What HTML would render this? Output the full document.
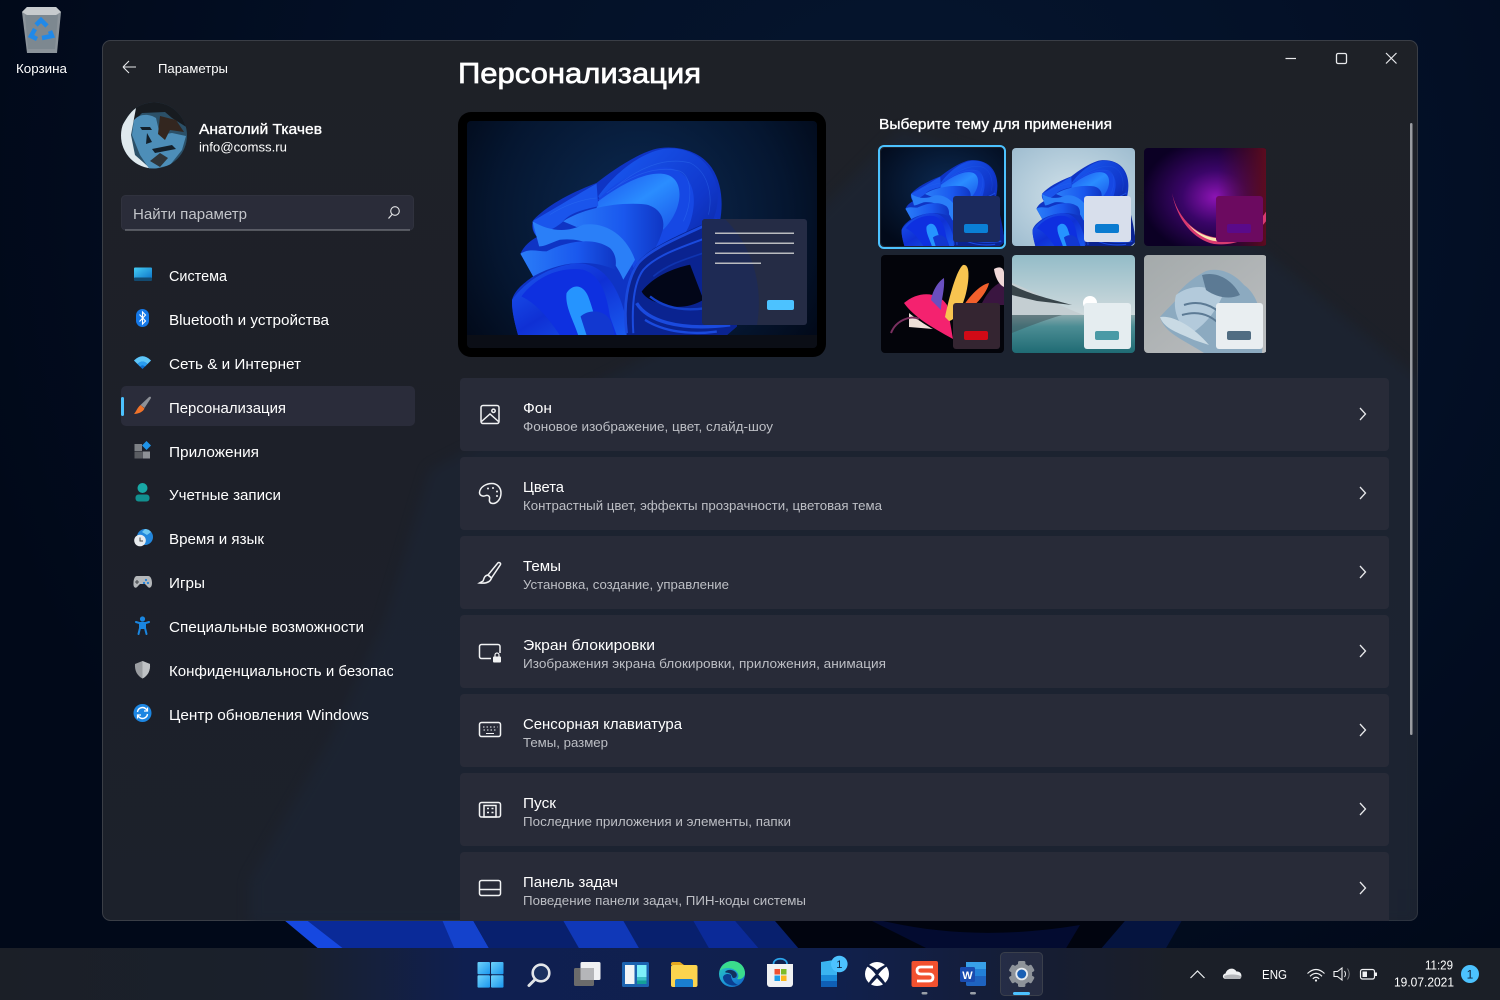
<!DOCTYPE html>
<html lang="ru">
<head>
<meta charset="utf-8">
<title>Параметры — Персонализация</title>
<style>
html,body{margin:0;padding:0;width:1500px;height:1000px;overflow:hidden;background:#020b1e}
svg{display:block;position:absolute;left:0;top:0}
text{font-family:"Liberation Sans","DejaVu Sans",sans-serif;fill:#fff;white-space:pre}
.t15{font-size:15px}
.t13{font-size:13px}
.sub{font-size:13px;fill:#bdbfc5}
</style>
</head>
<body>
<svg width="1500" height="1000" viewBox="0 0 1500 1000" xmlns="http://www.w3.org/2000/svg">
<defs>
  <radialGradient id="wall" gradientUnits="userSpaceOnUse" cx="900" cy="200" r="950">
    <stop offset="0" stop-color="#06162f"/><stop offset=".6" stop-color="#030f25"/><stop offset="1" stop-color="#010919"/>
  </radialGradient>
  <linearGradient id="taskbar" x1="0" x2="1" y1="0" y2="0">
    <stop offset="0" stop-color="#1b1f27"/><stop offset=".2" stop-color="#1a202c"/><stop offset=".31" stop-color="#0f1f50"/><stop offset=".55" stop-color="#10204e"/><stop offset=".7" stop-color="#161d32"/><stop offset=".78" stop-color="#1b1f28"/><stop offset="1" stop-color="#1b1f27"/>
  </linearGradient>
  <linearGradient id="winbg" x1="0" x2="0" y1="0" y2="1">
    <stop offset="0" stop-color="#1e2127"/><stop offset=".5" stop-color="#1d2029"/><stop offset="1" stop-color="#1c212b"/>
  </linearGradient>
  <filter id="soft" x="-10%" y="-10%" width="120%" height="120%" color-interpolation-filters="sRGB"><feGaussianBlur stdDeviation="6"/></filter>
  <clipPath id="winclip"><rect x="102" y="40" width="1316" height="881" rx="8"/></clipPath>
  <clipPath id="navclip"><rect x="160" y="650" width="233" height="40"/></clipPath>
  <clipPath id="tc"><rect width="123" height="98" rx="4"/></clipPath>
  <clipPath id="av"><circle cx="154" cy="135.500" r="33"/></clipPath>
  <clipPath id="pv"><rect x="467" y="121" width="350" height="227" rx="4"/></clipPath>

  <linearGradient id="bTop" x1="0" y1="0" x2="1" y2="1"><stop offset="0" stop-color="#1a5cf5"/><stop offset=".6" stop-color="#1038cc"/><stop offset="1" stop-color="#0a1f8a"/></linearGradient>
  <linearGradient id="bBright" x1="0" y1="0" x2="1" y2="1"><stop offset="0" stop-color="#1b52ee"/><stop offset=".5" stop-color="#2a8dff"/><stop offset="1" stop-color="#1a56ea"/></linearGradient>
  <linearGradient id="bMid" x1="0" y1="0" x2="1" y2="0"><stop offset="0" stop-color="#2a7df8"/><stop offset=".6" stop-color="#1a58ee"/><stop offset="1" stop-color="#0f36c4"/></linearGradient>
  <linearGradient id="bLow" x1="0" y1="0" x2="1" y2="1"><stop offset="0" stop-color="#1c5af2"/><stop offset=".5" stop-color="#0f30d4"/><stop offset="1" stop-color="#1a5cf0"/></linearGradient>
  <radialGradient id="pvbg" gradientUnits="userSpaceOnUse" cx="640" cy="215" r="210">
    <stop offset="0" stop-color="#0c2a52"/><stop offset=".7" stop-color="#051630"/><stop offset="1" stop-color="#020a1a"/>
  </radialGradient>

  <symbol id="bloom" viewBox="52 64 1048 642" preserveAspectRatio="xMinYMid slice">
    <path d="M187 600C195 570 225 548 250 530L212 462C222 438 245 420 262 412C248 398 244 378 250 362C290 320 350 285 440 250C490 210 560 165 610 150C660 135 745 145 785 205C825 265 820 350 795 420C830 500 860 620 860 680L830 706H205C195 670 185 630 187 600Z" fill="#0f34c4"/>
    <path d="M445 290C490 225 570 160 640 148C710 138 780 175 800 260C815 340 770 420 700 470C650 505 590 530 555 560L500 380Z" fill="url(#bTop)"/>
    <path d="M445 300C500 240 590 195 660 205C730 225 745 290 720 370C700 430 630 480 560 530L500 370Z" fill="#1648e4"/>
    <path d="M445 305C505 260 590 210 650 225C705 240 700 330 640 390C600 335 520 320 440 325Z" fill="url(#bBright)"/>
    <path d="M252 362C300 335 390 280 440 252L445 320C400 330 360 340 340 365C310 392 285 395 262 412C250 395 246 378 252 362Z" fill="#1a55ec"/>
    <path d="M340 365C400 325 510 305 590 315C630 325 650 360 635 400C620 450 590 480 570 510C540 420 470 370 380 382Z" fill="url(#bMid)"/>
    <path d="M248 365C300 395 350 400 400 375C470 365 530 410 555 480L520 540C490 470 430 410 330 420C300 430 285 440 268 440Z" fill="#2a7ff8"/>
    <path d="M212 462C240 445 260 455 290 455C350 425 430 410 480 445C500 465 500 490 495 510C430 480 340 480 250 530Z" fill="url(#bMid)"/>
    <path d="M187 600C230 540 300 500 380 490C450 490 490 540 515 610L545 706H205C195 670 185 630 187 600Z" fill="url(#bLow)"/>
    <path d="M215 590C260 530 330 500 400 510C450 525 470 580 480 650L500 706H330C300 660 260 610 215 590Z" fill="#0e30e0"/>
    <path d="M350 580C370 550 400 555 415 590C430 630 440 670 445 706H385C370 660 345 620 350 580Z" fill="#2594ff"/>
    <path d="M392 650C420 625 470 630 485 670L495 706H410Z" fill="#1238d0"/>
    <path d="M530 706C525 620 525 540 560 490C600 440 700 400 790 360C830 470 860 620 860 680L830 706Z" fill="#0a2390"/>
    <path d="M575 575C610 530 670 505 720 495L760 600C720 625 670 625 640 615C610 605 585 595 575 575Z" fill="#020618"/>
    <g fill="none" stroke="#1a4ade">
      <path d="M530 700C520 620 530 540 565 490C610 440 700 410 800 360" stroke-width="8"/>
      <path d="M550 700C545 620 550 550 580 510C620 465 700 440 795 405" stroke-width="6"/>
      <path d="M560 610C590 660 680 695 840 675" stroke-width="10"/>
      <path d="M585 660C640 695 720 706 800 695" stroke-width="7"/>
      <path d="M600 590C650 630 720 640 815 615" stroke-width="7" stroke="#1440c8"/>
      <path d="M610 530C650 495 700 480 775 455" stroke="#0f34b0" stroke-width="5"/>
    </g>
    <g fill="none" stroke="#3a80f8" stroke-width="2" opacity=".35">
      <path d="M500 260C560 210 640 170 720 190C770 215 790 280 775 345"/>
      <path d="M470 280C540 230 620 195 690 215C730 235 725 310 700 365"/>
      <path d="M300 345C340 320 390 300 440 295"/>
    </g>
  </symbol>

  <g id="chev"><path d="M0 -6L5.500 0L0 6" fill="none" stroke="#e8e9eb" stroke-width="1.300"/></g>
</defs>

<!-- wallpaper -->
<rect width="1500" height="1000" fill="url(#wall)"/>
<g>
  <path d="M278 915L322 950H470L455 915Z" fill="#0a2a98"/>
  <path d="M278 915L300 915L345 950H320Z" fill="#1648e0"/>
  <path d="M440 915L455 950H490L470 915Z" fill="#1442cc"/>
  <path d="M470 915L490 950H800L770 915Z" fill="#08206e"/>
  <path d="M560 915L580 950H640L620 915Z" fill="#1038b8"/>
  <path d="M690 915L710 950H760L730 915Z" fill="#0b2a98"/>
  <path d="M770 915H1130L1100 950H800Z" fill="#01040f"/>
  <path d="M860 915C930 935 1000 938 1080 925L1065 950H930Z" fill="#030b30"/>
  <path d="M1130 915H1185L1165 950H1100Z" fill="#05143f"/>
</g>

<!-- recycle bin -->
<path d="M22 12L27 7H56L61 12L57 53H27Z" fill="#8b939a"/>
<path d="M22 12L27 7H56L61 12L56 15H27Z" fill="#c7cbce"/>
<path d="M25 15H58L55 49H28Z" fill="#7d8890"/>
<g fill="none" stroke="#2189e8" stroke-width="4.500">
  <path d="M36 25L41 20L47 26"/>
  <path d="M50 31L52 36L42 38"/>
  <path d="M37 39L31 36L35 29"/>
</g>
<text x="16" y="73" class="t13" textLength="51" lengthAdjust="spacingAndGlyphs">Корзина</text>

<!-- window -->
<rect x="102.500" y="40.500" width="1315" height="880" rx="8" fill="url(#winbg)" stroke="#3a3e46"/>
<g clip-path="url(#winclip)">
  <path d="M430 470L385 620L330 740L250 880V925H1420V380L1250 240L900 130L700 330Z" fill="#1c2637" opacity=".55" filter="url(#soft)"/>
</g>

<!-- title bar -->
<path d="M123 67H136M123 67L129 61M123 67L129 73" fill="none" stroke="#e8e9eb" stroke-width="1.100"/>
<text x="158" y="73" class="t13" textLength="70" lengthAdjust="spacingAndGlyphs">Параметры</text>
<path d="M1285.500 58.500H1296" stroke="#e8e9eb" stroke-width="1.200"/>
<rect x="1336.500" y="53.500" width="10" height="10" rx="1.500" fill="none" stroke="#e8e9eb" stroke-width="1.300"/>
<path d="M1386 53L1396.500 63.500M1396.500 53L1386 63.500" stroke="#e8e9eb" stroke-width="1.200"/>

<!-- avatar -->
<g clip-path="url(#av)">
  <rect x="120" y="102" width="68" height="68" fill="#2b5068"/>
  <path d="M120 102H188V128L172 118L165 112L142 113L130 125L120 140Z" fill="#171b20"/>
  <path d="M120 130C125 120 130 112 136 108L131 135L135 155L152 170H120Z" fill="#dfe9ee"/>
  <path d="M134 120C140 113 150 114 156 118L160 135L172 133L186 136L182 150L170 165L150 170L140 155L132 135Z" fill="#4d8eb8"/>
  <path d="M160 116L176 120L184 132L170 130L165 140L158 134Z" fill="#33261f"/>
  <path d="M140 127H150L152 130H142ZM147 133L152 142L146 144ZM152 149L172 145L176 149L155 153Z" fill="#14202a"/>
  <path d="M160 153L168 158L160 167L150 161Z" fill="#2f3438"/>
</g>
<text x="199" y="134" class="t15" stroke="#fff" stroke-width=".35" textLength="123" lengthAdjust="spacingAndGlyphs">Анатолий Ткачев</text>
<text x="199" y="151.500" class="t13" textLength="88" lengthAdjust="spacingAndGlyphs">info@comss.ru</text>

<!-- search -->
<rect x="121.500" y="195.500" width="292" height="34.500" rx="4" fill="#2a2c39" stroke="#30323e"/>
<path d="M125 230H410" stroke="#8b8d93" stroke-width="1"/>
<text x="133" y="219" class="t15" style="fill:#c2c4c9" textLength="114" lengthAdjust="spacingAndGlyphs">Найти параметр</text>
<circle cx="395" cy="211" r="4.300" fill="none" stroke="#e5e6e8" stroke-width="1.100"/>
<path d="M392 214.500L388.500 218.500" stroke="#e5e6e8" stroke-width="1.200"/>

<!-- nav -->
<rect x="121" y="386" width="294" height="40" rx="5" fill="#2a2c3a"/>
<rect x="121" y="397" width="3" height="19" rx="1.500" fill="#4cc2ff"/>
<g class="t15">
  <text x="169" y="281" class="t15" textLength="58" lengthAdjust="spacingAndGlyphs">Система</text>
  <text x="169" y="325" class="t15" textLength="160" lengthAdjust="spacingAndGlyphs">Bluetooth и устройства</text>
  <text x="169" y="369" class="t15" textLength="132" lengthAdjust="spacingAndGlyphs">Сеть &amp; и Интернет</text>
  <text x="169" y="413" class="t15" textLength="117" lengthAdjust="spacingAndGlyphs">Персонализация</text>
  <text x="169" y="457" class="t15" textLength="90" lengthAdjust="spacingAndGlyphs">Приложения</text>
  <text x="169" y="500" class="t15" textLength="112" lengthAdjust="spacingAndGlyphs">Учетные записи</text>
  <text x="169" y="544" class="t15" textLength="95" lengthAdjust="spacingAndGlyphs">Время и язык</text>
  <text x="169" y="588" class="t15" textLength="36" lengthAdjust="spacingAndGlyphs">Игры</text>
  <text x="169" y="632" class="t15" textLength="195" lengthAdjust="spacingAndGlyphs">Специальные возможности</text>
  <g clip-path="url(#navclip)"><text x="169" y="676" class="t15" textLength="264" lengthAdjust="spacingAndGlyphs">Конфиденциальность и безопасность</text></g>
  <text x="169" y="720" class="t15" textLength="200" lengthAdjust="spacingAndGlyphs">Центр обновления Windows</text>
</g>

<!-- nav icons -->
<defs>
  <linearGradient id="sys" x1="0" y1="0" x2="1" y2="1"><stop offset="0" stop-color="#45cdf5"/><stop offset="1" stop-color="#0e76c8"/></linearGradient>
</defs>
<rect x="134" y="267.500" width="18" height="11" rx="1" fill="url(#sys)"/>
<rect x="134" y="277.500" width="18" height="3.500" rx="1" fill="#124a70"/>
<rect x="136" y="309" width="13" height="18" rx="6.500" fill="#1478e8"/>
<path d="M139.500 314.500L145.500 321L142.500 324V312L145.500 315L139.500 321.500" fill="none" stroke="#fff" stroke-width="1.100"/>
<path d="M134 360.500Q142.500 352 151 360.500L142.500 369Z" fill="#0d70d2"/>
<path d="M134 360.500Q142.500 352 151 360.500L147.500 364Q142.500 359 137.500 364Z" fill="#5ec6f8"/>
<path d="M137.500 364Q142.500 359 147.500 364L145 366.500Q142.500 364 140 366.500Z" fill="#2a9df0"/>
<path d="M140.500 405L149 397Q151 396 151 398L144.500 408Z" fill="#8e9197"/>
<path d="M140.500 405L144.500 408.500C143 412 138 414 134 414C136 412 137 408 140.500 405Z" fill="#f0732a"/>
<rect x="134.500" y="444" width="7.500" height="7" fill="#7d8085"/>
<rect x="134.500" y="451.500" width="7.500" height="7" fill="#5a5d62"/>
<rect x="142.500" y="451.500" width="7.500" height="7" fill="#8e9196"/>
<path d="M146.500 441L151 445.500L146.500 450L142 445.500Z" fill="#1f93e8"/>
<circle cx="142.500" cy="488" r="5" fill="#18a8a5"/>
<rect x="135.500" y="494.500" width="14" height="7" rx="3" fill="#12908f"/>
<circle cx="145" cy="537" r="8" fill="#2387dc"/>
<path d="M145 529a8 8 0 0 1 6 3l-4 3-5-3z" fill="#6fc8f2"/>
<circle cx="140" cy="540.500" r="5.800" fill="#e8ebee"/>
<path d="M140 537.500V541H143" fill="none" stroke="#444" stroke-width="1"/>
<path d="M137 576H148C151 576 152 580 152 583C152 588 149 589 147 586L145 584H140L138 586C136 589 133 588 133.500 583C133.500 580 134.500 576 137 576Z" fill="#b4b7ba"/>
<path d="M137 580v4M135 582h4" stroke="#45484c" stroke-width="1.100"/>
<circle cx="146" cy="580" r="1.100" fill="#1f7fd8"/><circle cx="148" cy="583" r="1.100" fill="#1f7fd8"/><circle cx="144" cy="583" r="1.100" fill="#1f7fd8"/>
<circle cx="142.500" cy="619" r="2.600" fill="#1a86e0"/>
<path d="M136 622L142.500 624L149 622M141 624L138.500 634M144 624L146.500 634M140 624H145V628H140Z" fill="#1a86e0" stroke="#1a86e0" stroke-width="2" stroke-linecap="round"/>
<path d="M142.500 661L150 664C150.500 671 147.500 676 142.500 678.500C137.500 676 134.500 671 135 664Z" fill="#9a9da1"/>
<path d="M142.500 661L150 664C150.500 671 147.500 676 142.500 678.500Z" fill="#bfc2c5"/>
<circle cx="142.500" cy="713" r="9" fill="#1c86e2"/>
<path d="M137.500 712a5 5 0 0 1 8.500-3l1.500 1.500M147.500 714a5 5 0 0 1-8.500 3l-1.500-1.500" fill="none" stroke="#fff" stroke-width="1.400"/>
<path d="M147.500 707.500v3.500h-3.500M137.500 718.500v-3.500h3.500" fill="none" stroke="#fff" stroke-width="1.200"/>

<!-- heading -->
<text x="458" y="83" font-size="29" stroke="#fff" stroke-width=".7" textLength="243" lengthAdjust="spacingAndGlyphs">Персонализация</text>

<!-- preview -->
<rect x="458" y="112" width="368" height="245" rx="13" fill="#000"/>
<g clip-path="url(#pv)">
  <rect x="467" y="121" width="350" height="227" fill="url(#pvbg)"/>
  <use href="#bloom" x="467" y="121" width="350" height="214"/>
  <rect x="467" y="335" width="350" height="13" fill="#0b0e16"/>
</g>
<rect x="702" y="219" width="105" height="106" rx="3" fill="#252c45"/>
<path d="M702 222a3 3 0 0 1 3-3h20c30 30 38 70 32 106h-52a3 3 0 0 1-3-3z" fill="#1d2b58" opacity=".8"/>
<g fill="#b9bbbf">
  <rect x="715" y="232.500" width="79" height="1.500"/>
  <rect x="715" y="242.500" width="79" height="1.500"/>
  <rect x="715" y="252.500" width="79" height="1.500"/>
  <rect x="715" y="262.500" width="46" height="1.500"/>
</g>
<rect x="767" y="300" width="27" height="10" rx="2" fill="#4cc2ff"/>

<!-- theme picker -->
<text x="879" y="129" class="t15" stroke="#fff" stroke-width=".35" textLength="233" lengthAdjust="spacingAndGlyphs">Выберите тему для применения</text>

<defs>
  <radialGradient id="t1bg" cx=".55" cy=".4" r=".7"><stop offset="0" stop-color="#0c2a52"/><stop offset="1" stop-color="#020a1a"/></radialGradient>
  <radialGradient id="t2bg" cx=".5" cy=".5" r=".7"><stop offset="0" stop-color="#d2e2ea"/><stop offset="1" stop-color="#9fbdd0"/></radialGradient>
  <radialGradient id="t3bg" cx=".58" cy=".5" r=".6"><stop offset="0" stop-color="#8c14b4"/><stop offset=".45" stop-color="#3a0568"/><stop offset="1" stop-color="#0b0024"/></radialGradient>
  <linearGradient id="t3r" x1="0" x2="1" y1="0" y2="0"><stop offset=".6" stop-color="#500a30" stop-opacity="0"/><stop offset="1" stop-color="#5e0c1e"/></linearGradient>
  <linearGradient id="t5s" x1="0" x2="0" y1="0" y2="1"><stop offset="0" stop-color="#93bcc8"/><stop offset="1" stop-color="#cfdadd"/></linearGradient>
  <linearGradient id="t5w" x1="0" x2="0" y1="0" y2="1"><stop offset="0" stop-color="#8aa9ad"/><stop offset=".3" stop-color="#4c8d94"/><stop offset="1" stop-color="#1f6b74"/></linearGradient>
  <linearGradient id="t6bg" x1="0" x2="1" y1="0" y2="1"><stop offset="0" stop-color="#a4aaab"/><stop offset="1" stop-color="#bcbec0"/></linearGradient>
</defs>

<rect x="879" y="146" width="126" height="102" rx="5" fill="none" stroke="#4cc2ff" stroke-width="2"/>
<svg x="881" y="148" width="123" height="98" viewBox="0 0 123 98">
  <g clip-path="url(#tc)">
    <rect width="123" height="98" fill="url(#t1bg)"/>
    <use href="#bloom" width="123" height="98"/>
    <rect x="72" y="48" width="47" height="46" rx="3" fill="#1b2a5e"/>
    <rect x="83" y="76" width="24" height="9" rx="2" fill="#0a7fd6"/>
  </g>
</svg>
<svg x="1012" y="148" width="123" height="98" viewBox="0 0 123 98">
  <g clip-path="url(#tc)">
    <rect width="123" height="98" fill="url(#t2bg)"/>
    <use href="#bloom" width="123" height="98"/>
    <rect x="72" y="48" width="47" height="46" rx="3" fill="#d8dfec"/>
    <rect x="83" y="76" width="24" height="9" rx="2" fill="#0a7bd0"/>
  </g>
</svg>
<svg x="1144" y="148" width="122" height="98" viewBox="0 0 122 98">
  <g clip-path="url(#tc)">
    <rect width="123" height="98" fill="url(#t3bg)"/>
    <rect width="123" height="98" fill="url(#t3r)"/>
    <path d="M28 45C34 72 55 90 78 90C95 90 112 80 123 62V72C108 92 90 98 70 96C50 92 33 72 28 45Z" fill="#d83a70"/>
    <path d="M44 76C56 88 70 92 86 90C75 97 58 93 44 76Z" fill="#f8e8b0"/>
    <rect x="72" y="48" width="47" height="46" rx="3" fill="#6c0a60"/>
    <rect x="83" y="76" width="24" height="9" rx="2" fill="#5a0a8a"/>
  </g>
</svg>
<svg x="881" y="255" width="123" height="98" viewBox="0 0 123 98">
  <g clip-path="url(#tc)">
    <rect width="123" height="98" fill="#03040a"/>
    <path d="M23 48C38 35 58 37 66 50L72 84C50 72 33 62 23 48Z" fill="#f4226f"/>
    <path d="M28 58C38 66 48 72 52 74L28 72Z" fill="#eee0d8"/>
    <path d="M50 45C52 34 58 26 63 23C64 35 60 45 60 55Z" fill="#6a4fc0"/>
    <path d="M64 62C68 42 76 14 82 10C90 8 88 28 84 42C80 55 74 65 68 66Z" fill="#f8c450"/>
    <path d="M80 55C86 44 98 30 108 28C106 38 95 50 84 58Z" fill="#f2602c"/>
    <path d="M100 50C106 38 112 30 123 26V50Z" fill="#3a1540"/>
    <path d="M113 14C120 10 123 14 123 18V32C118 30 114 22 113 14Z" fill="#f0d8d8"/>
    <path d="M10 78C15 65 30 60 38 64" fill="none" stroke="#7a3060" stroke-width="2"/>
    <rect x="72" y="48" width="47" height="46" rx="3" fill="#342531"/>
    <rect x="83" y="76" width="24" height="9" rx="2" fill="#d10a16"/>
  </g>
</svg>
<svg x="1012" y="255" width="123" height="98" viewBox="0 0 123 98">
  <g clip-path="url(#tc)">
    <rect width="123" height="60" fill="url(#t5s)"/>
    <rect y="60" width="123" height="38" fill="url(#t5w)"/>
    <path d="M0 28C15 33 40 48 72 60H0Z" fill="#c4ced2"/>
    <path d="M0 30C15 38 30 42 60 50L25 46L0 40Z" fill="#38444a"/>
    <path d="M0 78C15 72 30 66 50 60H0Z" fill="#3b4a50" opacity=".45"/>
    <circle cx="78" cy="48" r="7" fill="#fff"/>
    <rect x="72" y="48" width="47" height="46" rx="3" fill="#e5edf0"/>
    <rect x="83" y="76" width="24" height="9" rx="2" fill="#4a9aa6"/>
  </g>
</svg>
<svg x="1144" y="255" width="122" height="98" viewBox="0 0 122 98">
  <g clip-path="url(#tc)">
    <rect width="123" height="98" fill="url(#t6bg)"/>
    <path d="M16 62C28 48 36 44 34 38C45 25 55 20 62 16C75 12 90 18 100 30C112 38 122 60 118 98H60C40 85 20 78 16 62Z" fill="#8caac0"/>
    <path d="M32 40C45 30 65 28 78 42C70 60 58 72 45 80C35 70 28 55 32 40Z" fill="#b3cadb"/>
    <path d="M58 20C72 16 88 24 96 40C85 45 72 42 62 35Z" fill="#5c7a94"/>
    <path d="M40 50C55 45 70 50 80 62M38 60C55 55 68 60 78 72" fill="none" stroke="#5c7a94" stroke-width="2"/>
    <path d="M16 62C28 60 48 70 65 90L50 85C35 78 20 74 16 62Z" fill="#c9dae4"/>
    <rect x="72" y="48" width="47" height="46" rx="3" fill="#e9eef1"/>
    <rect x="83" y="76" width="24" height="9" rx="2" fill="#506c82"/>
  </g>
</svg>

<!-- cards -->
<g clip-path="url(#winclip)">
  <g fill="#282b38">
    <rect x="460" y="378" width="929" height="73" rx="4"/>
    <rect x="460" y="457" width="929" height="73" rx="4"/>
    <rect x="460" y="536" width="929" height="73" rx="4"/>
    <rect x="460" y="615" width="929" height="73" rx="4"/>
    <rect x="460" y="694" width="929" height="73" rx="4"/>
    <rect x="460" y="773" width="929" height="73" rx="4"/>
    <rect x="460" y="852" width="929" height="73" rx="4"/>
  </g>
</g>
<rect x="1410" y="123" width="2.500" height="612" rx="1.250" fill="#9a9ca1"/>

<text x="523" y="413" class="t15" textLength="29" lengthAdjust="spacingAndGlyphs">Фон</text>
<text x="523" y="431" class="sub" textLength="250" lengthAdjust="spacingAndGlyphs">Фоновое изображение, цвет, слайд-шоу</text>
<text x="523" y="492" class="t15" textLength="41" lengthAdjust="spacingAndGlyphs">Цвета</text>
<text x="523" y="510" class="sub" textLength="359" lengthAdjust="spacingAndGlyphs">Контрастный цвет, эффекты прозрачности, цветовая тема</text>
<text x="523" y="571" class="t15" textLength="38" lengthAdjust="spacingAndGlyphs">Темы</text>
<text x="523" y="589" class="sub" textLength="206" lengthAdjust="spacingAndGlyphs">Установка, создание, управление</text>
<text x="523" y="650" class="t15" textLength="132" lengthAdjust="spacingAndGlyphs">Экран блокировки</text>
<text x="523" y="668" class="sub" textLength="363" lengthAdjust="spacingAndGlyphs">Изображения экрана блокировки, приложения, анимация</text>
<text x="523" y="729" class="t15" textLength="159" lengthAdjust="spacingAndGlyphs">Сенсорная клавиатура</text>
<text x="523" y="747" class="sub" textLength="85" lengthAdjust="spacingAndGlyphs">Темы, размер</text>
<text x="523" y="808" class="t15" textLength="33" lengthAdjust="spacingAndGlyphs">Пуск</text>
<text x="523" y="826" class="sub" textLength="268" lengthAdjust="spacingAndGlyphs">Последние приложения и элементы, папки</text>
<text x="523" y="887" class="t15" textLength="95" lengthAdjust="spacingAndGlyphs">Панель задач</text>
<text x="523" y="905" class="sub" textLength="283" lengthAdjust="spacingAndGlyphs">Поведение панели задач, ПИН-коды системы</text>

<use href="#chev" x="1360" y="414"/>
<use href="#chev" x="1360" y="493"/>
<use href="#chev" x="1360" y="572"/>
<use href="#chev" x="1360" y="651"/>
<use href="#chev" x="1360" y="730"/>
<use href="#chev" x="1360" y="809"/>
<use href="#chev" x="1360" y="888"/>

<!-- card icons -->
<g fill="none" stroke="#f2f3f4" stroke-width="1.500">
  <rect x="481" y="405.500" width="18" height="18" rx="2"/>
  <path d="M481.500 421.500L490 414L498.500 421.500"/>
  <circle cx="493.500" cy="410.800" r="1.700"/>

  <path d="M492 483.500C497 483.500 501 487.500 501 493C501 499 497 503.500 493 503.500C490 503.500 489 501.500 489.500 499C490 496.500 488.500 495 486 495.500C483 497 479.500 495.500 479.500 492.500C480 487 486 483.500 492 483.500Z"/>
  <g fill="#f2f3f4" stroke="none"><circle cx="488" cy="488.500" r="1"/><circle cx="493" cy="488" r="1"/><circle cx="497" cy="491.500" r="1"/><circle cx="497" cy="496" r="1"/></g>

  <path d="M488 575L498 562.800C499 562 501 563 500.500 564.500L491.500 578Z"/>
  <path d="M488 575C484 575.500 484 579 483 581L479.500 583C484 583.500 490 583 491.500 578Z"/>

  <path d="M500 653V646.500A2 2 0 0 0 498 644.500H481.500A2 2 0 0 0 479.500 646.500V656.500A2 2 0 0 0 481.500 658.500H491"/>
  <rect x="493" y="656.500" width="8" height="6" rx="1" fill="#f2f3f4" stroke="none"/>
  <path d="M495 657V655A2 2 0 0 1 499 655V657" stroke-width="1.200"/>

  <rect x="479.500" y="722.500" width="21" height="14" rx="2"/>
  <path d="M483 727h1.500M486.500 727h1.500M490 727h1.500M493.500 727h1.500M497 727h.5M483.500 730h1.500M487 730h1.500M490.500 730h1.500M494 730h1.500M486 733.500h8" stroke-width="1.100"/>

  <rect x="479.500" y="802.500" width="21" height="14.500" rx="2"/>
  <rect x="484" y="805.500" width="12" height="11.500"/>
  <path d="M487 808.500h2M491.500 808.500h2M487 812.500h2M491.500 812.500h2" stroke-width="1.500"/>

  <rect x="479.500" y="880.500" width="21" height="15" rx="2"/>
  <path d="M479.500 889.500H500.500"/>
</g>

<!-- taskbar -->
<rect y="948" width="1500" height="52" fill="url(#taskbar)"/>

<!-- start -->
<defs>
  <linearGradient id="st" x1="0" y1="0" x2="1" y2="1"><stop offset="0" stop-color="#6fd3fb"/><stop offset="1" stop-color="#1a96ee"/></linearGradient>
  <linearGradient id="edge" x1="0" y1="0" x2="1" y2="1"><stop offset="0" stop-color="#2ad0b0"/><stop offset=".5" stop-color="#1d9ad8"/><stop offset="1" stop-color="#0f5fc0"/></linearGradient>
  <linearGradient id="blueapp" x1="0" y1="0" x2="0" y2="1"><stop offset="0" stop-color="#3ac0f5"/><stop offset=".5" stop-color="#2a9ee8"/><stop offset="1" stop-color="#0f5fb5"/></linearGradient>
</defs>
<g fill="url(#st)">
  <rect x="477.500" y="962" width="12.500" height="12.300" rx="1"/>
  <rect x="491" y="962" width="12.500" height="12.300" rx="1"/>
  <rect x="477.500" y="975.300" width="12.500" height="12.300" rx="1"/>
  <rect x="491" y="975.300" width="12.500" height="12.300" rx="1"/>
</g>
<circle cx="541" cy="973" r="8.300" fill="#1a3060" stroke="#e3e6ea" stroke-width="2.600"/>
<path d="M535 979.500L529 985.500" stroke="#dfe2e6" stroke-width="3" stroke-linecap="round"/>
<rect x="574" y="968" width="20" height="18" rx="1.500" fill="#6b6b6b"/>
<rect x="580.500" y="962" width="20" height="18" rx="1.500" fill="#f0f1f3"/>
<rect x="580.500" y="968" width="13.500" height="12" fill="#b5b6b9"/>
<rect x="622" y="962" width="27" height="25" rx="1.500" fill="#1c63b0"/>
<rect x="625" y="965" width="9.500" height="19" fill="#f2f4f6"/>
<rect x="637" y="965" width="9.500" height="12" fill="#7ef0fa"/>
<rect x="637" y="977" width="9.500" height="3.500" fill="#3cc0c8"/>
<rect x="637" y="980.500" width="9.500" height="3.500" fill="#14a098"/>
<path d="M671 964A2 2 0 0 1 673 962H680L684 965H671Z" fill="#e6a820"/>
<rect x="671" y="965" width="26.500" height="22" rx="2" fill="#fcd44e"/>
<path d="M675 987V981A2 2 0 0 1 677 979H691A2 2 0 0 1 693 981V987Z" fill="#1a7fd0"/>
<circle cx="732" cy="974" r="13" fill="url(#edge)"/>
<path d="M719.500 971C722 964 728 961 732 961C740 961 745 967 745 973C745 978 740 980 737 979C739 977 739 974 736 971C732 967 723 967 719.500 971Z" fill="#3adc8c"/>
<path d="M723 977C723 983 730 987 738 985C733 983 731 979 731 975C728 973 724 974 723 977Z" fill="#0b3e90"/>
<path d="M725 972C727 969 734 969 736.500 973.500C737.500 976 736 978 734 978C731 978 733 974 728.500 973C727 972.500 726 973 725 972Z" fill="#12315e"/>
<!-- store -->
<path d="M773.500 964C773.500 957 787 957 787 964" fill="none" stroke="#2ba5ea" stroke-width="1.800"/>
<path d="M767 964H793V984A3 3 0 0 1 790 987H770A3 3 0 0 1 767 984Z" fill="#f0f1f3"/>
<rect x="774.500" y="969" width="5.500" height="5.500" fill="#f05030"/>
<rect x="781" y="969" width="5.500" height="5.500" fill="#7cbb28"/>
<rect x="774.500" y="975.500" width="5.500" height="5.500" fill="#1c9ce8"/>
<rect x="781" y="975.500" width="5.500" height="5.500" fill="#fbb81c"/>
<!-- blue app -->
<path d="M821 962L834 960V987H821Z" fill="url(#blueapp)"/>
<rect x="821" y="975" width="16" height="6" fill="#1a8ad8"/>
<rect x="821" y="981" width="16" height="6" fill="#0f5fb5"/>
<rect x="821" y="962" width="16" height="13" fill="#3ab4f0"/>
<circle cx="839.300" cy="964" r="8.300" fill="#4cc2ff"/>
<text x="839.300" y="968" font-size="11" text-anchor="middle" style="fill:#10203a">1</text>
<!-- xbox -->
<circle cx="877" cy="974" r="12" fill="#fff"/>
<path d="M868 964.500C872 966 875 968 877 970C879 968 882 966 886 964.500L887.500 966C883 968.500 880 972 878.300 974.500C882 978 885 982 886.500 985.500L885 986.500L877 978L869 986.500L867.500 985.500C869 982 872 978 875.700 974.500C874 972 871 968.500 866.500 966Z" fill="#0f1d45"/>
<!-- S app -->
<rect x="911.500" y="961" width="26.500" height="26" rx="2" fill="#f2512f"/>
<path d="M933 967H921Q917 967 917 970.500Q917 974 921 974H929Q933 974 933 977.500Q933 981 929 981H917" fill="none" stroke="#fff" stroke-width="2.800"/>
<rect x="921.500" y="992" width="6" height="2.500" rx="1.200" fill="#9aa0a8"/>
<!-- word -->
<rect x="966" y="962" width="20" height="24" rx="1.500" fill="#1e63c0"/>
<rect x="966" y="962" width="20" height="7" fill="#38a0e8"/>
<rect x="966" y="969" width="20" height="7" fill="#2280d8"/>
<rect x="960" y="967" width="15" height="15" rx="1.500" fill="#1a4cb0"/>
<text x="967.500" y="979" font-size="11" font-weight="bold" text-anchor="middle">W</text>
<rect x="970" y="992" width="6" height="2.500" rx="1.200" fill="#9aa0a8"/>
<!-- settings -->
<rect x="1000.500" y="952.500" width="42" height="43" rx="4" fill="#ffffff" fill-opacity=".07" stroke="#3a3f4b"/>
<g fill="#8e939a">
  <circle cx="1021.700" cy="974" r="10.500"/>
  <rect x="1018" y="961" width="7.400" height="6" rx="1.500"/>
  <rect x="1018" y="981" width="7.400" height="6" rx="1.500"/>
  <rect x="1018" y="961" width="7.400" height="6" rx="1.500" transform="rotate(60 1021.700 974)"/>
  <rect x="1018" y="961" width="7.400" height="6" rx="1.500" transform="rotate(120 1021.700 974)"/>
  <rect x="1018" y="961" width="7.400" height="6" rx="1.500" transform="rotate(240 1021.700 974)"/>
  <rect x="1018" y="961" width="7.400" height="6" rx="1.500" transform="rotate(300 1021.700 974)"/>
</g>
<circle cx="1021.700" cy="974" r="6.300" fill="#e8ebef"/>
<circle cx="1021.700" cy="974" r="4.500" fill="#1a5fb4"/>
<rect x="1013" y="992" width="17" height="3" rx="1.500" fill="#4cc2ff"/>

<!-- tray -->
<path d="M1190.500 978L1197.500 971L1204.500 978" fill="none" stroke="#eceef0" stroke-width="1.200"/>
<path d="M1226 979C1222 979 1222 974 1225.500 973.500C1227 968 1234 967 1236.500 971.500C1241 971 1243 976 1240 979Z" fill="#f0f1f3"/>
<path d="M1224 976C1228 974 1238 974 1241.500 976.500C1241 978.500 1240 979 1239 979H1226C1225 979 1224.500 978 1224 976Z" fill="#b5b7bb"/>
<text x="1262" y="979" class="t13" textLength="25" lengthAdjust="spacingAndGlyphs">ENG</text>
<g fill="none" stroke="#f0f1f3" stroke-width="1.200">
  <path d="M1307.500 973.500Q1316 965.500 1324.500 973.500"/>
  <path d="M1310 976.300Q1316 970.500 1322 976.300"/>
  <path d="M1312.800 978.800Q1316 975.800 1319.200 978.800"/>
</g>
<circle cx="1316" cy="980.500" r="1.100" fill="#f0f1f3"/>
<path d="M1334 971.500H1337.500L1342 968V980L1337.500 976.500H1334Z" fill="none" stroke="#f0f1f3" stroke-width="1.100"/>
<path d="M1344.500 971Q1346.500 974 1344.500 977" fill="none" stroke="#f0f1f3" stroke-width="1"/>
<path d="M1347.500 968.500Q1351 974 1347.500 979.500" fill="none" stroke="#7d8085" stroke-width="1"/>
<rect x="1360.500" y="969.500" width="14" height="9.500" rx="2" fill="none" stroke="#f0f1f3" stroke-width="1.200"/>
<rect x="1362.500" y="971.500" width="4.500" height="5.500" fill="#f0f1f3"/>
<rect x="1375" y="972.500" width="2" height="3.500" fill="#f0f1f3"/>
<text x="1425" y="969.500" class="t13" textLength="28" lengthAdjust="spacingAndGlyphs">11:29</text>
<text x="1394" y="986.500" class="t13" textLength="60" lengthAdjust="spacingAndGlyphs">19.07.2021</text>
<circle cx="1470" cy="974" r="9" fill="#4cc2ff"/>
<text x="1470" y="978.500" font-size="12" text-anchor="middle" style="fill:#10203a">1</text>
</svg>
</body>
</html>
